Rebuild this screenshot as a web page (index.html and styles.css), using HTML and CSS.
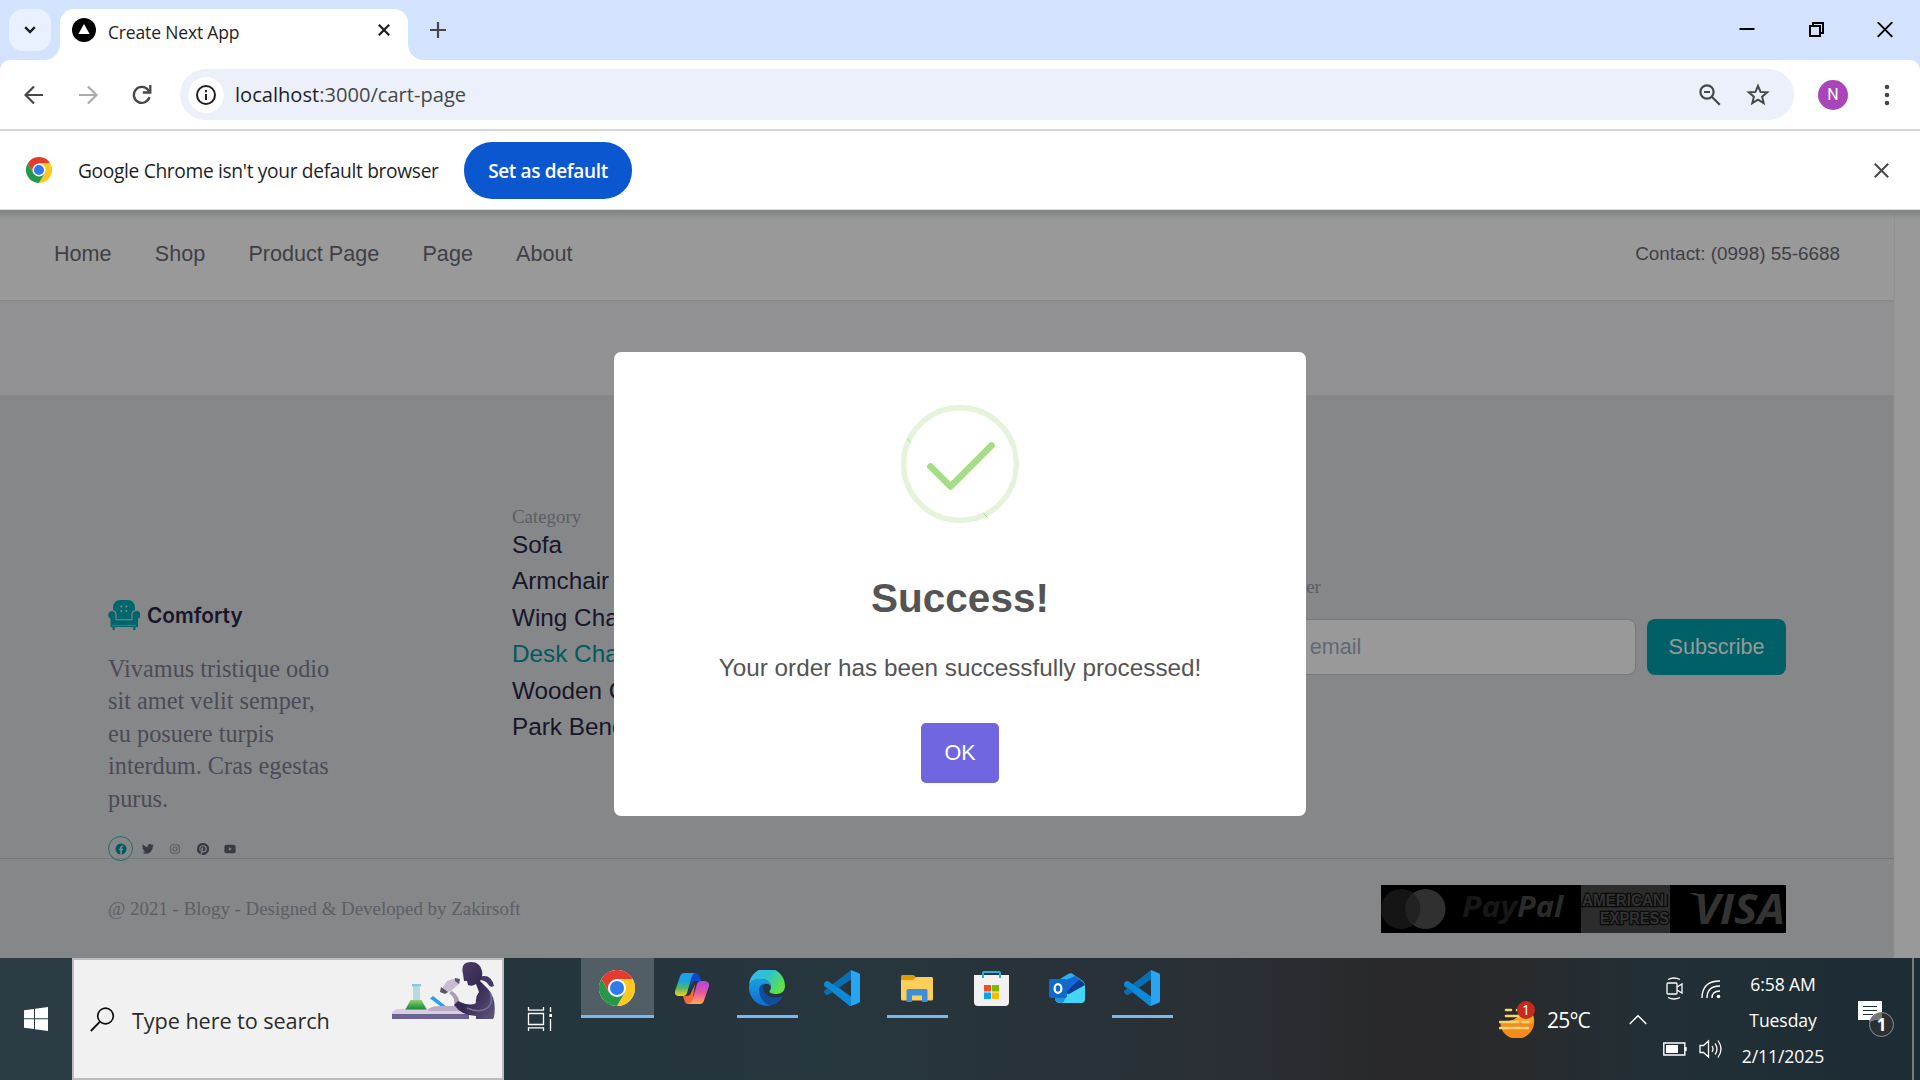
FILE: index.html
```html
<!DOCTYPE html>
<html lang="en">
<head>
<meta charset="utf-8">
<title>Create Next App</title>
<link rel="stylesheet" href="styles.css">
</head>
<body>
<svg class="defs" width="0" height="0" aria-hidden="true">
  <defs>
    <symbol id="chrome" viewBox="0 0 48 48">
      <circle cx="24" cy="24" r="24" fill="#fff"/>
      <path d="M24 12h20.8A24 24 0 0 0 3.2 12l10.4 18z" fill="#e33b2e"/>
      <path d="M24 24m10.4 6L24 48A24 24 0 0 0 44.8 12H24z" fill="#fdc921"/>
      <path d="M13.6 30L3.2 12A24 24 0 0 0 24 48l10.4-18z" fill="#279847"/>
      <circle cx="24" cy="24" r="12" fill="#fff"/>
      <circle cx="24" cy="24" r="9.4" fill="#2f7bed"/>
    </symbol>
    <symbol id="vscode" viewBox="0 0 36 36">
      <path d="M27 0L9.300 16.500 4.300 12.500a2 2 0 0 0-2.300.1L.6 14a1.700 1.700 0 0 0 0 2.500L27 36V26.500L14.500 17.500 27 9z" fill="#0b7fc8"/>
      <path d="M27 0L.6 20.500a1.700 1.700 0 0 0 0 2.500L2 24.600a2 2 0 0 0 2.300.1L27 9.500z" fill="#0a6eb3"/>
      <path d="M.6 12.500L2 11.300a2 2 0 0 1 2.300 0L27 27v9a2.400 2.400 0 0 1-2-.6L.6 15a1.700 1.700 0 0 1 0-2.500z" fill="#0c8ad8"/>
      <path d="M27 0l8 3.300a2 2 0 0 1 1 1.700v26a2 2 0 0 1-1 1.700L27 36z" fill="#27a5f2"/>
    </symbol>
  </defs>
</svg>

<header class="tabstrip">
  <div class="tab-search"><svg width="12" height="8" viewBox="0 0 12 8"><path d="M1.200 1.200L6 6l4.800-4.800" fill="none" stroke="#1f1f1f" stroke-width="2.400"/></svg></div>
  <div class="tab">
    <svg width="24" height="24" viewBox="0 0 24 24"><circle cx="12" cy="12" r="12"/><path d="M12 6l5.600 10H6.400z" fill="#fff"/></svg>
    <span class="tab-title">Create Next App</span>
    <svg class="tab-close" width="12" height="12" viewBox="0 0 12 12"><path d="M.8.8l10.400 10.400M11.200.8L.8 11.200" stroke="#1f1f1f" stroke-width="2.200"/></svg>
  </div>
  <svg class="new-tab" width="16" height="16" viewBox="0 0 16 16"><path d="M8 0v16M0 8h16" stroke="#474747" stroke-width="2.200"/></svg>
  <div class="window-buttons">
    <svg width="16" height="16" viewBox="0 0 16 16"><path d="M.5 7h15" stroke="#000" stroke-width="2"/></svg>
    <svg width="16" height="16" viewBox="0 0 16 16"><path d="M2 4h10v10H2zM5 4V1h10v10h-3" fill="none" stroke="#000" stroke-width="2"/></svg>
    <svg width="16" height="16" viewBox="0 0 16 16"><path d="M.7.200l14.600 14.600M15.300.200L.7 14.800" stroke="#000" stroke-width="1.900"/></svg>
  </div>
</header>

<div class="toolbar-back">
<div class="toolbar">
  <div class="nav-buttons">
    <svg width="20" height="20" viewBox="0 0 20 20"><path d="M19 10H2.500M10 1.500L1.500 10l8.500 8.500" fill="none" stroke="#474747" stroke-width="2.200"/></svg>
    <svg width="20" height="20" viewBox="0 0 20 20"><path d="M1 10h16.500M10 1.500l8.500 8.500-8.500 8.500" fill="none" stroke="#ababab" stroke-width="2.200"/></svg>
    <svg width="20" height="20" viewBox="0 0 20 20"><path d="M17.500 12.200A8 8 0 1 1 16.200 5l2 2.200M18.300 0v7.500h-7.500" fill="none" stroke="#474747" stroke-width="2.300"/></svg>
  </div>
  <div class="omnibox">
    <span class="site-info"><svg width="20" height="20" viewBox="0 0 20 20"><circle cx="10" cy="10" r="9" fill="none" stroke="#202020" stroke-width="2"/><path d="M10 9v6M10 5v2.200" stroke="#202020" stroke-width="2"/></svg></span>
    <span class="url"><b>localhost</b>:3000/cart-page</span>
    <svg class="zoom-icon" width="22" height="22" viewBox="0 0 22 22"><circle cx="8" cy="8" r="6.600" fill="none" stroke="#474747" stroke-width="2.200"/><path d="M5 8h6M12.800 12.800l8 8" stroke="#474747" stroke-width="2.200"/></svg>
    <svg class="star-icon" width="24" height="24" viewBox="0 0 24 24"><path d="M12 2.800l2.500 6.100 6.700.5-5.100 4.300 1.600 6.400L12 16.700l-5.700 3.400 1.600-6.400-5.100-4.300 6.700-.5z" fill="none" stroke="#474747" stroke-width="2"/></svg>
  </div>
  <span class="avatar">N</span>
  <svg class="kebab" width="6" height="22" viewBox="0 0 6 22"><g fill="#474747"><circle cx="3" cy="3" r="2.300"/><circle cx="3" cy="11" r="2.300"/><circle cx="3" cy="19" r="2.300"/></g></svg>
</div>
</div>

<div class="infobar">
  <svg width="26" height="26"><use href="#chrome"/></svg>
  <span class="infobar-text">Google Chrome isn't your default browser</span>
  <span class="infobar-button">Set as default</span>
  <svg class="infobar-close" width="15" height="15" viewBox="0 0 15 15"><path d="M.8.8l13.400 13.400M14.200.8L.8 14.200" stroke="#474747" stroke-width="2"/></svg>
</div>

<main class="viewport">
  <div class="page">
    <nav class="site-nav">
      <a>Home</a><a>Shop</a><a>Product Page</a><a>Page</a><a>About</a>
      <span class="contact">Contact: (0998) 55-6688</span>
    </nav>
    <section class="cart"></section>
    <footer class="footer">
      <div class="footer-main">
        <div class="brand">
          <div class="logo">
            <svg width="32" height="30" viewBox="0 0 32 30"><g fill="#00666d"><path d="M5 10V7a7 7 0 0 1 7-7h8a7 7 0 0 1 7 7v3a5 5 0 0 0-3.600 5v4H8.600v-4A5 5 0 0 0 5 10z"/><path d="M4 11a4 4 0 0 1 3.500 4v5.200h17V15a4 4 0 1 1 5.500 3.600V27h-2.600v3h-2.200v-3H6.800v3H4.600v-3H2.500v-8.400A4 4 0 0 1 4 11z"/></g><g fill="#868788"><circle cx="13.300" cy="6.500" r="1"/><circle cx="18.300" cy="6.500" r="1"/><circle cx="13.300" cy="11" r="1"/><circle cx="18.300" cy="11" r="1"/></g><path d="M8 19.700h16M4 25.500h24" stroke="#4e7c7f" stroke-width=".8"/></svg>
            <span>Comforty</span>
          </div>
          <p>Vivamus tristique odio<br>sit amet velit semper,<br>eu posuere turpis<br>interdum. Cras egestas<br>purus.</p>
          <div class="social">
            <span class="ring"><svg width="12" height="12" viewBox="0 0 12 12"><circle cx="6" cy="6" r="5.500" fill="#005a60"/><path d="M5.200 11.500V7.300H3.900V5.800h1.300V4.700c0-1.400.8-2.100 2-2.100h1v1.300h-.6c-.6 0-.8.3-.8.800v1.100h1.400l-.3 1.500H6.800v4.200z" fill="#868788"/></svg></span>
            <svg width="12" height="12" viewBox="0 0 24 24"><path d="M23.600 4.500a9.800 9.800 0 0 1-2.800.8 4.900 4.900 0 0 0 2.100-2.700 9.800 9.800 0 0 1-3 1.200 4.900 4.900 0 0 0-8.400 4.500A13.900 13.900 0 0 1 1.400 3.200 4.900 4.900 0 0 0 2.900 9.700a4.900 4.900 0 0 1-2.200-.6c0 2.300 1.600 4.400 3.900 4.900a5 5 0 0 1-2.200.1 4.900 4.900 0 0 0 4.600 3.400A9.900 9.900 0 0 1 0 19.500a13.900 13.900 0 0 0 7.500 2.200c9.100 0 14.300-7.700 14-14.600a10 10 0 0 0 2.100-2.600z" fill="#3a3a46"/></svg>
            <svg width="12" height="12" viewBox="0 0 12 12"><rect x="1.700" y="1.700" width="8.600" height="8.600" rx="2.200" fill="none" stroke="#5f5f68" stroke-width="1.100"/><circle cx="6" cy="6" r="2" fill="none" stroke="#5f5f68" stroke-width="1.100"/><circle cx="8.500" cy="3.500" r=".6" fill="#5f5f68"/></svg>
            <svg width="12" height="12" viewBox="0 0 24 24"><path d="M12 0a12 12 0 0 0-4.400 23.200c-.1-1-.2-2.400 0-3.500l1.500-6s-.4-.7-.4-1.800c0-1.700 1-2.900 2.200-2.900 1 0 1.500.8 1.500 1.700 0 1-.7 2.600-1 4-.3 1.200.6 2.200 1.800 2.200 2.100 0 3.800-2.300 3.800-5.500 0-2.900-2.100-4.900-5-4.900-3.500 0-5.500 2.600-5.500 5.300 0 1 .4 2.200.9 2.800l.1.300-.4 1.500c-1.500-.7-2.500-2.800-2.500-4.600 0-3.800 2.700-7.200 7.900-7.200 4.100 0 7.300 2.900 7.300 6.900 0 4.100-2.600 7.400-6.200 7.400-1.200 0-2.300-.6-2.700-1.400l-.7 2.800c-.3 1-1 2.300-1.500 3.100A12 12 0 1 0 12 0z" fill="#3a3a46"/></svg>
            <svg width="12" height="12" viewBox="0 0 12 12"><rect x=".4" y="1.800" width="11.200" height="8.400" rx="2" fill="#3a3a46"/><path d="M4.900 4.200L7.800 6 4.900 7.800z" fill="#868788"/></svg>
          </div>
        </div>
        <div class="category">
          <h4>Category</h4>
          <a>Sofa</a><a>Armchair</a><a>Wing Chair</a><a class="active">Desk Chair</a><a>Wooden Chair</a><a>Park Bench</a>
        </div>
        <div class="newsletter">
          <h4>Newsletter</h4>
          <div class="subscribe-row"><span class="field">Your email</span><span class="subscribe">Subscribe</span></div>
        </div>
      </div>
      <div class="footer-bottom">
        <span class="copyright">@ 2021 - Blogy - Designed &amp; Developed by Zakirsoft</span>
        <svg class="payments" width="405" height="48" viewBox="0 0 405 48">
          <rect width="405" height="48" fill="#000"/>
          <ellipse cx="20" cy="24" rx="20" ry="20" fill="#151515"/><ellipse cx="44.500" cy="24" rx="20" ry="20" fill="#303030"/>
          <path d="M32 8.500a20 20 0 0 1 0 31 20 20 0 0 1 0-31z" fill="#222"/>
          <text x="81" y="32" class="pay" textLength="55" lengthAdjust="spacingAndGlyphs" fill="#171717">Pay</text>
          <text x="136" y="32" class="pay" textLength="46" lengthAdjust="spacingAndGlyphs" fill="#2b2b2b">Pal</text>
          <rect x="200" width="89" height="48" fill="#2c2c2c"/>
          <path d="M200.500 21.500h86V9" fill="none" stroke="#0b0b0b" stroke-width="1.200"/>
          <g class="amex"><text x="201" y="21" textLength="82" lengthAdjust="spacingAndGlyphs">AMERICAN</text><text x="219" y="39" textLength="69" lengthAdjust="spacingAndGlyphs">EXPRESS</text></g>
          <path d="M308 8h7l9 5-3 1q-2-3-8-4z" fill="#333"/>
          <text x="313" y="39" class="visa" textLength="91" lengthAdjust="spacingAndGlyphs">VISA</text>
        </svg>
      </div>
    </footer>
  </div>
  <div class="scroll-gutter"></div>

  <div class="overlay">
    <div class="modal">
      <svg class="success" width="118" height="118" viewBox="0 0 118 118"><circle cx="59" cy="59" r="56.300" fill="none" stroke="#e4f4db" stroke-width="5.400"/><path d="M6.500 33.500l3 4M82.500 108.500l4 4" stroke="#a5dc86" stroke-width="1"/><path d="M29.500 61.500L49.500 81.500 90.500 40.500" fill="none" stroke="#a5dc86" stroke-width="6.700" stroke-linecap="round" stroke-linejoin="round"/></svg>
      <h2>Success!</h2>
      <p>Your order has been successfully processed!</p>
      <span class="ok">OK</span>
    </div>
  </div>
</main>

<footer class="taskbar">
  <div class="start"><svg width="24" height="24" viewBox="0 0 24 24"><path d="M0 3.300L10 2v9.300H0zM11 1.800L24 0v11.300H11zM0 12.300h10V22L0 20.700zM11 12.300h13V24L11 22.200z" fill="#fff"/></svg></div>
  <div class="search">
    <svg width="25" height="25" viewBox="0 0 25 25"><circle cx="15.500" cy="9" r="7.800" fill="none" stroke="#111" stroke-width="1.700"/><path d="M10 14.700L.8 24" stroke="#111" stroke-width="1.900"/></svg>
    <span class="search-text">Type here to search</span>
    <svg class="doodle" width="105" height="57" viewBox="0 0 105 57">
      <defs>
        <linearGradient id="skin" x1="0" y1="0" x2="1" y2="1"><stop offset="0" stop-color="#51426f"/><stop offset=".5" stop-color="#352850"/><stop offset="1" stop-color="#62567f"/></linearGradient>
        <linearGradient id="liquid" x1="0" y1="0" x2="0" y2="1"><stop offset="0" stop-color="#8cd06c"/><stop offset="1" stop-color="#128a35"/></linearGradient>
      </defs>
      <path d="M0 50l5-3h72v5H0z" fill="#dccbe6"/><path d="M0 52h77v5H0z" fill="#69638e"/>
      <path d="M21 24h7v13l8 11H12l9-11z" fill="#b9d8e2"/><path d="M18.500 38h11l5 9.500H13.500z" fill="url(#liquid)"/><path d="M20 22h9v2.300h-9z" fill="#89c7d9"/>
      <path d="M38 36.500l3-2.500 14 11-4 1z" fill="#2b9fea"/>
      <path d="M36 49q0-5 14-5h25v5z" fill="#b9acc4"/>
      <path d="M49 28l6-9 9-3 4 5-9 8-7 2z" fill="#c6bdd0"/><path d="M49 25l7 5-3 2-5-2zM63 16l5 1-1 5-4-3z" fill="#5d5269"/>
      <path d="M60 29q9 6 7 15h-5q2-8-5-13z" fill="#a99db4"/>
      <path d="M87 15q12-4 15 9-4 2-6-2-3-4-9-4z" fill="#46375f"/>
      <path d="M71 12Q68 0 79 0q9 0 11 9 1 6-2 10 4 4 8 8 9 10 6 28l-1 2H84v-3q-14 0-22-11l4-4q12 6 18 2-1-6 3-11l-3-8q-4 3-8 1l-1-4h-3z" fill="url(#skin)"/>
      <path d="M98 30q5 14-7 18-7 2-16-2" fill="none" stroke="#7b7097" stroke-width="1.500"/>
    </svg>
  </div>
  <div class="taskview"><svg width="25" height="24" viewBox="0 0 25 24"><path d="M1.500 0v3.200h15V0M1.500 6.500h15v11h-15zM1.500 24v-3.200h15V24M23.500 0v5M23.500 12v12" fill="none" stroke="#fff" stroke-width="1.300"/><path d="M22.300 7h2.700v3h-2.700z" fill="#fff"/></svg></div>
  <div class="apps">
    <div class="app current"><svg width="36" height="36"><use href="#chrome"/></svg></div>
    <div class="app"><svg width="34" height="31" viewBox="0 0 34 31">
      <defs>
        <linearGradient id="cp1" x1="0" y1="0" x2="0" y2="1"><stop offset="0" stop-color="#1b9ff0"/><stop offset=".35" stop-color="#1aa3e0"/><stop offset=".65" stop-color="#53b56c"/><stop offset="1" stop-color="#fbd013"/></linearGradient>
        <linearGradient id="cp2" x1="0" y1="0" x2="0" y2="1"><stop offset="0" stop-color="#a54ae8"/><stop offset=".5" stop-color="#e8559d"/><stop offset="1" stop-color="#ffac55"/></linearGradient>
      </defs>
      <path d="M17 0h4q2.500 0 3.200 2.500L26 8h-5q-3 0-4 3l-2 7z" fill="#1347c7"/>
      <path d="M17 31h-4q-2.500 0-3.200-2.500L8 23h4q3 0 4-3l4-9z" fill="#f56b3c"/>
      <path d="M9 0h11q-2 .5-3 3l-5 17q-1 3-4 3H3q-4-1-3-5L5 3.500Q6 0 9 0z" fill="url(#cp1)"/>
      <path d="M25 31H13q3-.5 4-3l5-17q1-3 4-3h4q5 1 4 5l-5 14.500Q28 31 25 31z" fill="url(#cp2)"/>
    </svg></div>
    <div class="app running"><svg width="36" height="36" viewBox="0 0 36 36">
      <defs>
        <linearGradient id="ed1" x1="0" y1="0" x2="1" y2=".5"><stop offset="0" stop-color="#35b8f1"/><stop offset=".55" stop-color="#2fc3cd"/><stop offset="1" stop-color="#5fe148"/></linearGradient>
        <linearGradient id="ed2" x1="0" y1="0" x2="0" y2="1"><stop offset="0" stop-color="#1b9de2"/><stop offset="1" stop-color="#0f6dd0"/></linearGradient>
      </defs>
      <path d="M0 16A18 18 0 0 1 36 16c0 5-3.500 8-8.500 8-4 0-7-1-7-2.500 0-1 1.500-2 1.500-4.500C22 12 17 9 11 9 5 9 1 12 0 16z" fill="url(#ed1)"/>
      <path d="M0 17c1-6 6-8 11-8 6 0 11 3 11 8-2-4-6-4-8.500-1.500C8 21 12 33 22 35.400A18 18 0 0 1 0 17z" fill="url(#ed2)"/>
      <path d="M10 20c0-3 2-5.500 4.500-6.300C12 22 20 29.500 29 27.500c2-.4 4-1.500 4.500-1 .5.600-3.500 7-11.500 9C14 34 10 26 10 20z" fill="#104e9c"/>
    </svg></div>
    <div class="app"><svg width="36" height="36"><use href="#vscode"/></svg></div>
    <div class="app running"><svg width="32" height="27" viewBox="0 0 32 27"><path d="M0 1.500Q0 0 1.500 0H12q1.500 0 2.500 2l1 3H0z" fill="#e09a08"/><path d="M0 5h12l3-3h15.500Q32 2 32 3.500V24q0 1.500-1.500 1.500h-29Q0 25.500 0 24z" fill="#fccf5b"/><path d="M5.500 27V15.500Q5.500 14 7 14h18q1.500 0 1.500 1.500V27H21v-6.500H11V27z" fill="#3b8fd8"/></svg></div>
    <div class="app"><svg width="35" height="35" viewBox="0 0 35 35"><path d="M0 4h35v27q0 4-4 4H4q-4 0-4-4z" fill="#f1f1f1"/><path d="M9 7V2q0-1 1-1h15q1 0 1 1v5" fill="none" stroke="#20b4e4" stroke-width="2"/><path d="M10 14h7v6.500h-7z" fill="#f25022"/><path d="M18 14h7v6.500h-7z" fill="#7fba00"/><path d="M10 21.500h7V28h-7z" fill="#00a4ef"/><path d="M18 21.500h7V28h-7z" fill="#ffb900"/></svg></div>
    <div class="app"><svg width="36" height="31" viewBox="0 0 36 31"><path d="M6 9L20 .6q1.500-.8 3 0L34 8l2 3-18 13H6z" fill="#2cb1ee"/><path d="M12 9l14-6 8 6v5L19 24z" fill="#1268cf"/><path d="M30 7l5 3v5L19 24l-2-5z" fill="#0a3b92"/><path d="M6 18l14 3 16-9v14q0 4-4 4H11q-4 0-5-4z" fill="#43d6f8"/><path d="M6 20l12 2-4 8q-7 0-8-4z" fill="#1992e4"/><rect y="6" width="18" height="19" rx="2" fill="#0f6bcb"/><ellipse cx="9" cy="15.500" rx="3.400" ry="4.300" fill="none" stroke="#fff" stroke-width="2.200"/></svg></div>
    <div class="app running"><svg width="36" height="36"><use href="#vscode"/></svg></div>
  </div>
  <div class="tray">
    <svg class="weather" width="37" height="37" viewBox="0 0 37 37">
      <path d="M1 20q15 3 19-7l14 1a17 17 0 0 1-32 13z" fill="#f48b1d"/><path d="M3 20q14 1 18-7l13 1q1 6-1 9z" fill="#fca52c"/>
      <path d="M7 9h5M18 9h2M7 15h14M1 21h18M24 21h5M1 27h28" stroke="#f6d271" stroke-width="2.600" stroke-linecap="round"/>
      <circle cx="27" cy="9" r="9" fill="#c42b1c"/><text x="27" y="13.500" class="badge-number">1</text>
    </svg>
    <span class="temperature">25°C</span>
    <svg class="chevron" width="18" height="11" viewBox="0 0 18 11"><path d="M.7 10L9 1.700 17.300 10" fill="none" stroke="#fff" stroke-width="1.500"/></svg>
    <div class="indicators">
      <svg width="24" height="24" viewBox="0 0 24 24"><g fill="none" stroke="#fff" stroke-width="1.300"><rect x="4" y="6" width="10" height="11" rx="1"/><path d="M14 10l5-3v9l-5-3M5 2.500q6-3 12 0M5 20.500q6 3 12 0"/></g></svg>
      <svg width="24" height="24" viewBox="0 0 24 24"><g fill="none" stroke="#fff" stroke-width="1.400"><path d="M3 21Q3 4 21 4" /><path d="M8 21Q8 9 21 9"/><path d="M13 21q0-7 8-7"/></g><circle cx="19.500" cy="19.500" r="1.800" fill="#fff"/></svg>
      <svg width="24" height="24" viewBox="0 0 24 24"><path d="M.8 5h21v12H.8zM23 9v4" fill="none" stroke="#fff" stroke-width="1.400"/><path d="M3 7h12v8H3z" fill="#fff"/></svg>
      <svg width="24" height="24" viewBox="0 0 24 24"><g fill="none" stroke="#fff" stroke-width="1.300"><path d="M1 7.500h3.500L9.500 3v16l-5-4.500H1zM13 8q2 3 0 6M16 5.500q4 5.500 0 11M19 2.500q6 8.500 0 17"/></g></svg>
    </div>
    <div class="clock"><span>6:58 AM</span><span>Tuesday</span><span>2/11/2025</span></div>
    <svg class="notifications" width="38" height="38" viewBox="0 0 38 38"><path d="M0 1h24v19H16v5l-5-5H0z" fill="#fff"/><path d="M5 6.500h14M5 10.500h14M5 14.500h10" stroke="#1f2d35" stroke-width="1.200"/><circle cx="23.500" cy="24.500" r="12" fill="#2d3033" stroke="#8b8f92"/><path d="M12 22A12 12 0 0 1 24 12.500V20h-7z" fill="#777"/><text x="23.500" y="31" class="notice-number">1</text></svg>
  </div>
  <div class="show-desktop"></div>
</footer>
</body>
</html>
```
FILE: styles.css
```css
* { box-sizing: border-box; margin: 0; padding: 0; }
body { width: 1920px; height: 1080px; overflow: hidden; display: flex; flex-direction: column; font-family: "Open Sans", "Noto Sans", sans-serif; color: #1f1f1f; background: #fff; }
svg { display: block; flex: none; }
span { white-space: nowrap; }
.defs { position: absolute; }

.tabstrip { height: 60px; flex: none; display: flex; align-items: center; padding-left: 9px; background: #d3e2fd; }
.tab-search { width: 42px; height: 42px; border-radius: 14px; background: #eaf1fe; display: flex; align-items: center; justify-content: center; }
.tab { position: relative; align-self: flex-end; width: 348px; height: 51px; margin-left: 9px; padding: 0 18px 9px 12px; display: flex; align-items: center; gap: 12px; background: #fff; border-radius: 14px 14px 0 0; }
.tab::before, .tab::after { content: ""; position: absolute; bottom: 0; width: 15px; height: 15px; }
.tab::before { left: -15px; background: radial-gradient(circle at 0 0, transparent 14.500px, #fff 15px); }
.tab::after { right: -15px; background: radial-gradient(circle at 100% 0, transparent 14.500px, #fff 15px); }
.tab-title { font-size: 17.500px; letter-spacing: -.16px; padding-top: 3px; }
.tab-close { margin-left: auto; }
.new-tab { margin-left: 22px; }
.window-buttons { margin-left: auto; padding-right: 27px; display: flex; gap: 53px; }

.toolbar-back { flex: none; background: #d3e2fd; }
.toolbar { height: 71px; display: flex; align-items: center; background: #fff; border-bottom: 2px solid #d6d8d7; border-radius: 10px 10px 0 0; padding-left: 24px; }
.nav-buttons { display: flex; gap: 34px; width: 156px; }
.omnibox { width: 1614px; height: 51px; border-radius: 26px; background: #ecf0fa; display: flex; align-items: center; padding-left: 8px; }
.site-info { width: 36px; height: 36px; border-radius: 50%; background: #fff; display: flex; align-items: center; justify-content: center; }
.url { margin-left: 11px; font-size: 20.100px; color: #474747; }
.url b { font-weight: 400; color: #1f1f1f; }
.zoom-icon { margin-left: auto; margin-right: 25px; }
.star-icon { margin-right: 24px; }
.avatar { width: 30px; height: 30px; margin-left: 24px; border-radius: 50%; background: #a846b9; color: #fff; font: 16px/30px Roboto, sans-serif; text-align: center; }
.kebab { margin-left: 36px; }

.infobar { height: 79px; flex: none; display: flex; align-items: center; border-bottom: 1px solid #dcdedd; padding: 0 31px 0 26px; }
.infobar-text { width: 386px; margin-left: 26px; font-size: 19.200px; letter-spacing: -.34px; padding-top: 1px; }
.infobar-button { width: 168px; height: 57px; border-radius: 28px; background: #0b57d0; color: #fff; font-size: 19px; font-weight: 600; line-height: 58px; text-align: center; letter-spacing: -.35px; }
.infobar-close { margin-left: auto; }

.viewport { position: relative; height: 748px; flex: none; display: flex; font-family: "Liberation Sans", Arial, sans-serif; background: #999; }
.viewport::before { content: ""; position: absolute; inset: 0 0 auto; height: 10px; background: linear-gradient(#808482, #99999900); z-index: 2; }
.page { width: 1894px; display: flex; flex-direction: column; }
.scroll-gutter { width: 26px; border-left: 1px solid #969696; background: #999; }
.site-nav { height: 90px; flex: none; display: flex; align-items: center; gap: 43.200px; padding: 0 54px 2px; color: #403f48; font-size: 21.600px; box-shadow: 0 1px 2px #00000018; z-index: 1; }
.contact { margin-left: auto; font-size: 18.900px; }
.cart { height: 95px; flex: none; background: #919193; }
.footer { flex: 1; background: #868788; font-family: "Liberation Serif", "Times New Roman", serif; }
.footer-main { height: 464px; display: flex; align-items: flex-start; padding: 0 108px; border-bottom: 1px solid #77787b; }
.footer h4 { font-size: 18.900px; line-height: 27px; font-weight: 400; color: #5d5e66; }
.brand { width: 404px; margin-top: 204px; color: #4b4b57; font-size: 24.300px; line-height: 32.400px; }
.logo { height: 32px; display: flex; align-items: center; gap: 7px; color: #17162a; font: 600 20.800px Inter, sans-serif; }
.brand p { margin-top: 22px; margin-bottom: 21px; }
.social { display: flex; align-items: center; gap: 15.500px; }
.ring { width: 25px; height: 25px; margin-right: -7px; border: 1px solid #21696d; border-radius: 50%; display: flex; align-items: center; justify-content: center; }
.category { width: 727px; margin-top: 110px; display: flex; flex-direction: column; color: #17162a; }
.category a { font: 24.300px/36.450px "Liberation Sans", Arial, sans-serif; }
.category .active { color: #005a60; }
.category h4 { line-height: 24px; margin-bottom: -2px; }
.newsletter { margin-top: 178px; width: 547px; font-family: "Liberation Sans", Arial, sans-serif; }
.newsletter h4 { font-family: "Liberation Serif", serif; margin-bottom: 19px; }
.subscribe-row { display: flex; justify-content: space-between; font-size: 21.600px; line-height: 54px; }
.field { width: 397px; height: 56px; padding-left: 20px; border: 1px solid #77787b; border-radius: 8px; background: #999; color: #646872; }
.subscribe { width: 139px; height: 56px; line-height: 56px; border-radius: 8px; background: #006068; color: #999; text-align: center; }
.footer-bottom { height: 99px; display: flex; align-items: center; justify-content: space-between; padding: 0 108px; }
.copyright { font-size: 18.900px; color: #5d5e66; }
.pay { font: italic 700 28px "Open Sans", sans-serif; }
.amex { font: 700 16px "Liberation Sans", sans-serif; fill: #333; stroke: #0b0b0b; stroke-width: 2.500px; paint-order: stroke; }
.visa { font: italic 700 41px "Open Sans", sans-serif; fill: #333; }

.overlay { position: absolute; inset: 0; z-index: 3; display: flex; align-items: center; justify-content: center; }
.modal { width: 692px; height: 464px; background: #fff; border-radius: 7px; display: flex; flex-direction: column; align-items: center; padding-top: 53px; color: #545454; }
.modal h2 { margin-top: 51px; font-size: 40.500px; line-height: 48px; font-weight: 700; }
.modal p { margin-top: 30px; font-size: 24.300px; line-height: 32px; }
.ok { width: 78px; height: 60px; margin-top: 39px; border-radius: 5px; background: #7066e0; color: #fff; font-size: 21.600px; line-height: 60px; text-align: center; letter-spacing: -.2px; }

.taskbar { height: 122px; flex: none; display: flex; color: #fff; background: linear-gradient(90deg, #2b3c44 0, #25353e 26%, #27363d 45%, #292f35 64%, #29282a 74%, #282b2d 79%, #222f36 86%, #1d2c35 100%); }
.start { width: 72px; display: flex; align-items: center; justify-content: center; }
.search { width: 432px; display: flex; align-items: center; padding-left: 16px; background: #f1f1f1; border: 2px solid #bcbcbc; color: #2b2b2b; }
.search-text { margin-left: 17px; font-size: 21.700px; letter-spacing: -.1px; padding-top: 2px; }
.doodle { margin: 2px 5px 0 auto; align-self: flex-start; }
.taskview { width: 77px; padding-left: 23px; display: flex; align-items: center; }
.apps { display: flex; gap: 2px; }
.app { width: 73px; height: 60px; display: flex; align-items: center; justify-content: center; position: relative; padding-right: 2px; }
.current { background: #515e65; }
.current::after, .running::after { content: ""; position: absolute; bottom: 0; left: 6px; right: 6px; height: 3px; background: #76b9ed; }
.current::after { left: 0; right: 0; }
.tray { margin-left: auto; display: flex; align-items: center; }
.badge-number { font: 14px "Open Sans", sans-serif; fill: #fff; text-anchor: middle; }
.temperature { width: 82px; margin-left: 11px; font-size: 21px; letter-spacing: -.8px; padding-top: 2px; }
.indicators { width: 60px; margin-left: 16px; display: grid; grid-template-columns: 24px 24px; column-gap: 12px; row-gap: 37px; }
.clock { width: 110px; margin-left: 5px; padding-top: 2px; display: flex; flex-direction: column; align-items: center; font-size: 17.600px; line-height: 36px; letter-spacing: -.1px; }
.notifications { margin: 0 16px 0 20px; }
.notice-number { font: 700 17px "Open Sans", sans-serif; fill: #fff; text-anchor: middle; }
.show-desktop { width: 8px; border-left: 2px solid #747c80; }
```
